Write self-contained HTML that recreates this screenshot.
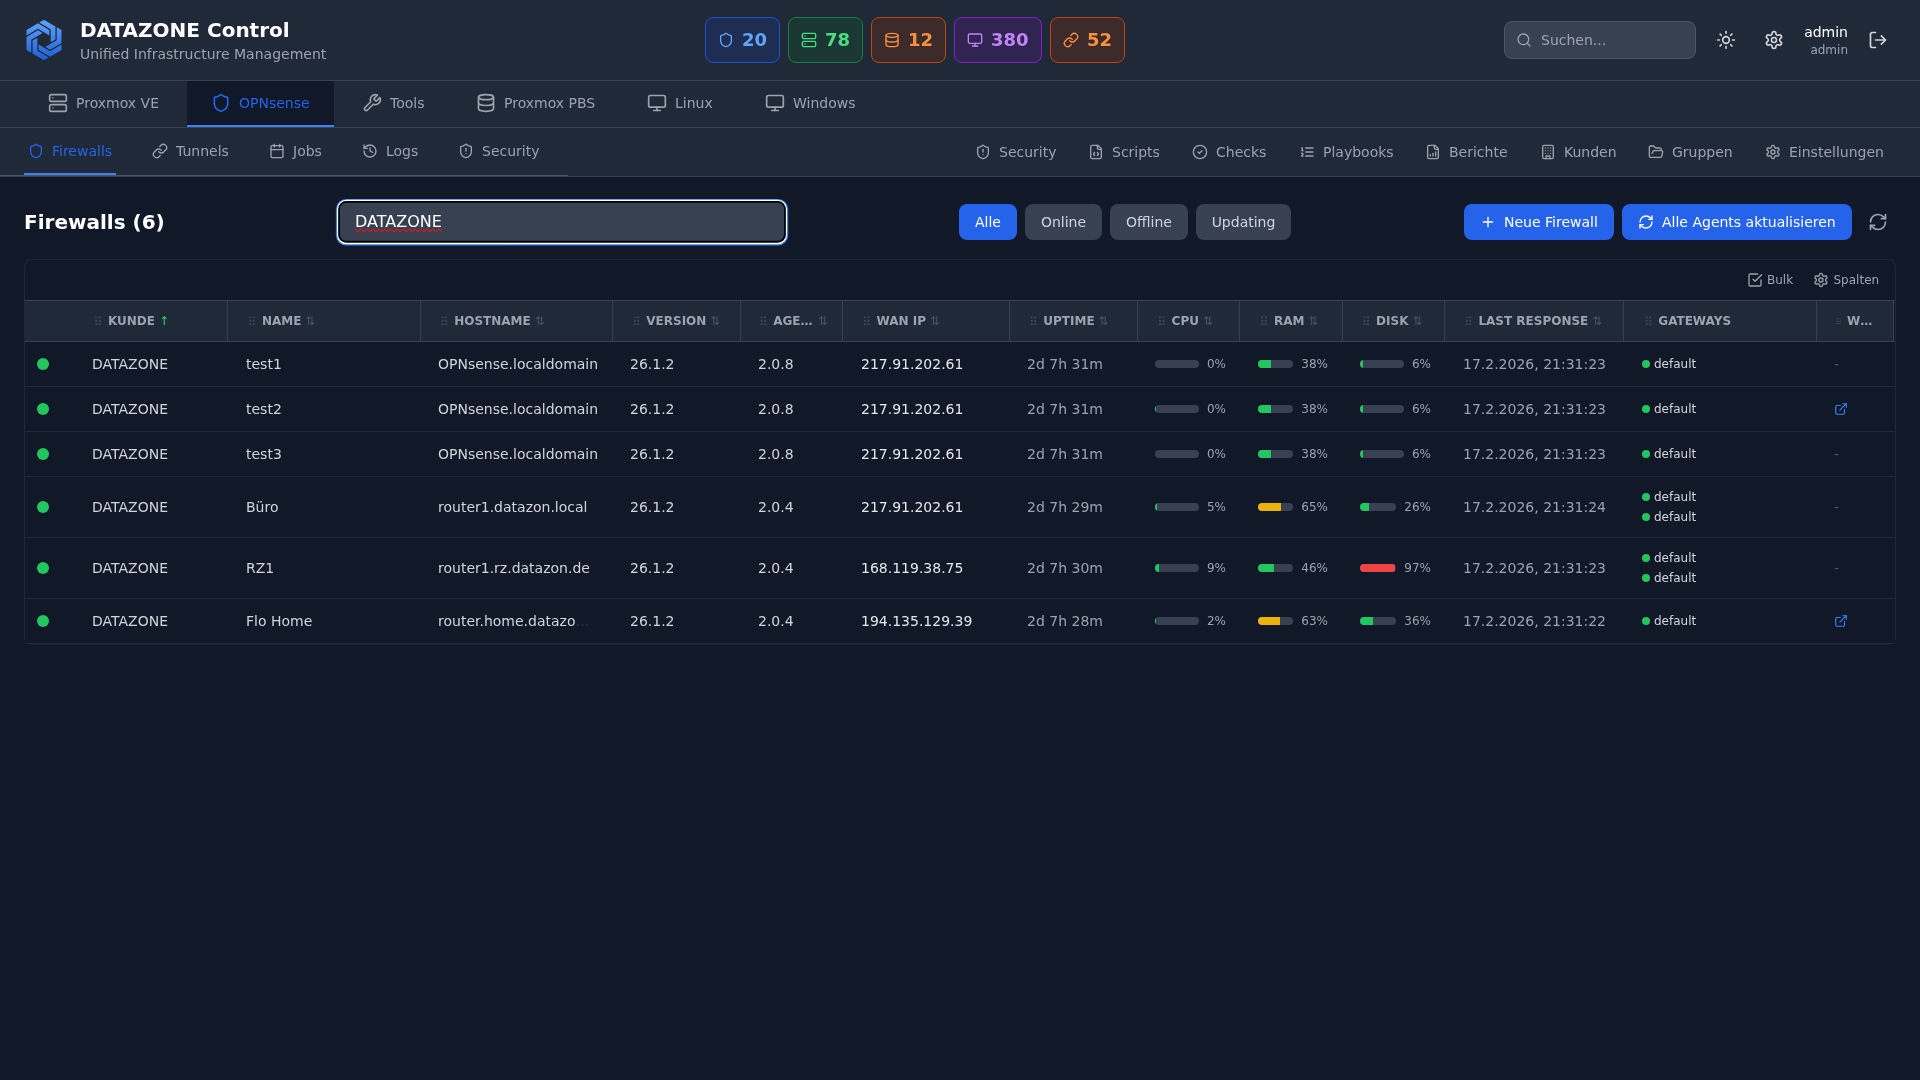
<!DOCTYPE html>
<html lang="de">
<head>
<meta charset="utf-8">
<title>DATAZONE Control</title>
<style>
*{box-sizing:border-box;margin:0;padding:0}
html,body{width:1920px;height:1080px;overflow:hidden}
body{background:#111827;color:#f3f4f6;font-family:"DejaVu Sans","Liberation Sans",sans-serif;font-size:14px;line-height:20px;position:relative}
svg.i{fill:none;stroke:currentColor;stroke-width:2;stroke-linecap:round;stroke-linejoin:round;display:block;flex:none}
.abs{position:absolute}
#root{position:absolute;left:0;top:0;width:1920px;height:1080px;will-change:transform}
/* header */
#hdr{position:absolute;left:0;top:0;width:1920px;height:81px;background:#1f2937;border-bottom:1px solid #374151}
#logo{position:absolute;left:24px;top:20px;width:40px;height:40px}
#title{position:absolute;left:80px;top:16px;font-size:20px;line-height:28px;font-weight:700;color:#fff;white-space:nowrap}
#subtitle{position:absolute;left:80px;top:44px;font-size:14px;line-height:20px;color:#9ca3af;white-space:nowrap}
.stat{position:absolute;top:17px;height:46px;border-radius:8px;border:1px solid;display:flex;align-items:center;padding-left:12px;font-size:18px;font-weight:700;white-space:nowrap}
.stat svg{width:16px;height:16px;margin-right:8px}
#search{position:absolute;left:1504px;top:21px;width:192px;height:38px;background:#374151;border:1px solid #4b5563;border-radius:8px;color:#9ca3af;font-size:14px;line-height:36px;padding-left:36px}
#search svg{position:absolute;left:11px;top:10px;width:16px;height:16px;color:#9ca3af}
.hico{position:absolute;width:20px;height:20px;color:#d1d5db}
#user1{position:absolute;right:72px;top:22px;font-size:14px;line-height:20px;color:#fff;font-weight:500;text-align:right}
#user2{position:absolute;right:72px;top:42px;font-size:12px;line-height:16px;color:#9ca3af;text-align:right}
/* main nav */
#nav1{position:absolute;left:0;top:81px;width:1920px;height:47px;background:#1f2937;border-bottom:1px solid #374151}
.t1{position:absolute;top:0;height:46px;border-bottom:2px solid transparent;display:flex;align-items:center;font-size:14px;color:#9ca3af;white-space:nowrap}
.t1 svg{width:20px;height:20px;margin-right:8px}
.t1.act{background:#111827;color:#2563eb;border-bottom:2px solid #3b82f6}
/* sub nav */
#nav2{position:absolute;left:0;top:128px;width:1920px;height:49px;background:#1f2937;border-bottom:1px solid #374151}
#nav2l{position:absolute;left:0;top:0;width:568px;height:48px;border-bottom:1px solid #4b5563}
.t2{position:absolute;top:0;height:47px;border-bottom:2px solid transparent;display:flex;align-items:center;font-size:14px;color:#9ca3af;white-space:nowrap}
.t2 svg{width:16px;height:16px;margin-right:8px}
.t2.act{color:#2563eb;border-bottom:2px solid #3b82f6}
.t3{position:absolute;top:0;height:48px;display:flex;align-items:center;font-size:14px;color:#9ca3af;white-space:nowrap}
.t3 svg{width:16px;height:16px;margin-right:8px}
/* toolbar */
#h1{position:absolute;left:24px;top:208px;font-size:20px;line-height:28px;font-weight:700;color:#fff;white-space:nowrap}
#filter{position:absolute;left:330px;top:194px;width:464px;height:58px;color:#fff;font-size:16px;line-height:24px}
#filter svg{position:absolute;left:0;top:0}
#filter b{position:absolute;left:25px;top:16px;font-weight:400}
.fb{position:absolute;top:204px;height:36px;border-radius:8px;background:#374151;color:#d1d5db;font-size:14px;line-height:36px;text-align:center;white-space:nowrap}
.fb.act{background:#2563eb;color:#fff}
.pb{position:absolute;top:204px;height:36px;border-radius:8px;background:#2563eb;color:#fff;font-size:14px;display:flex;align-items:center;white-space:nowrap}
.pb svg{width:16px;height:16px;margin-right:8px}
/* table */
#card{position:absolute;left:24px;top:259px;width:1872px;height:381px;border:1px solid #1f2937;border-bottom:0;border-radius:8px 8px 0 0}
#cardb{position:absolute;left:30px;top:644px;width:1860px;height:1px;background:#1f2937;opacity:.8}
#tools{position:absolute;left:0;top:0;width:1870px;height:41px;border-bottom:1px solid #374151}
.tool{position:absolute;top:0;height:40px;display:flex;align-items:center;font-size:12px;color:#9ca3af;white-space:nowrap}
.tool svg{width:16px;height:16px;margin-right:4px}
#thead{position:absolute;left:0;top:41px;width:1870px;height:41px;background:linear-gradient(to right,#1f2937 1869px,transparent 1869px);border-bottom:1px solid #374151}
.th{position:absolute;top:0;height:40px;border-right:1px solid #374151;font-size:12px;line-height:40px;font-weight:700;color:#9ca3af;white-space:nowrap;display:flex;align-items:center;padding-left:18px;overflow:hidden}
.th .g{font-size:12px;color:#3f4957;font-weight:400;margin-right:5.6px;position:relative;top:.8px}
.th .g.sm{font-size:9px;margin-right:5px}
.th .s{font-weight:400;color:#4b5563;font-size:12px;margin-left:4px}
.th .s.up{color:#27d869}
.th .s.r{margin-left:5.5px}
.row{position:absolute;left:0;width:1870px;border-bottom:1px solid #1f2937}
.c{position:absolute;top:0;height:100%;display:flex;align-items:center;font-size:14px;color:#d1d5db;white-space:nowrap}
.c.w{color:#e5e7eb}
.c.m{color:#9ca3af}
.c.d{color:#4b5563}
.el{color:#2d3748}
.dot{position:absolute;left:12px;width:12px;height:12px;border-radius:50%;background:#22c55e;top:50%;margin-top:-6px}
.bar{flex:1;height:8px;border-radius:4px;background:#374151;overflow:hidden;margin-right:8px}
.bar i{display:block;height:8px}
.pct{font-size:12px;color:#9ca3af;flex:none}
.gw{display:flex;align-items:center;font-size:12px;line-height:20px;color:#d1d5db}
.gw:before{content:"";width:8px;height:8px;border-radius:50%;background:#22c55e;margin-right:4px}
.gws{position:absolute;top:0;height:100%;display:flex;flex-direction:column;justify-content:center}
.ext{position:absolute;width:14px;height:14px;color:#3b82f6;top:50%;margin-top:-7px}
</style>
</head>
<body>
<svg width="0" height="0" style="position:absolute">
<defs>
<symbol id="server" viewBox="0 0 24 24"><rect width="20" height="8" x="2" y="2" rx="2" ry="2"/><rect width="20" height="8" x="2" y="14" rx="2" ry="2"/><line x1="6" x2="6.01" y1="6" y2="6"/><line x1="6" x2="6.01" y1="18" y2="18"/></symbol>
<symbol id="shield" viewBox="0 0 24 24"><path d="M20 13c0 5-3.5 7.5-7.66 8.950a1 1 0 0 1-.67-.01C7.5 20.500 4 18 4 13V6a1 1 0 0 1 1-1c2 0 4.500-1.200 6.240-2.720a1.170 1.170 0 0 1 1.520 0C14.510 3.810 17 5 19 5a1 1 0 0 1 1 1z"/></symbol>
<symbol id="shield-alert" viewBox="0 0 24 24"><path d="M20 13c0 5-3.5 7.5-7.66 8.950a1 1 0 0 1-.67-.01C7.5 20.500 4 18 4 13V6a1 1 0 0 1 1-1c2 0 4.500-1.200 6.240-2.720a1.170 1.170 0 0 1 1.520 0C14.510 3.810 17 5 19 5a1 1 0 0 1 1 1z"/><path d="M12 8v4"/><path d="M12 16h.01"/></symbol>
<symbol id="wrench" viewBox="0 0 24 24"><path d="M14.7 6.3a1 1 0 0 0 0 1.4l1.600 1.600a1 1 0 0 0 1.400 0l3.770-3.770a6 6 0 0 1-7.940 7.940l-6.910 6.910a2.120 2.120 0 0 1-3-3l6.910-6.910a6 6 0 0 1 7.940-7.940l-3.760 3.760z"/></symbol>
<symbol id="database" viewBox="0 0 24 24"><ellipse cx="12" cy="5" rx="9" ry="3"/><path d="M3 5V19A9 3 0 0 0 21 19V5"/><path d="M3 12A9 3 0 0 0 21 12"/></symbol>
<symbol id="monitor" viewBox="0 0 24 24"><rect width="20" height="14" x="2" y="3" rx="2"/><line x1="8" x2="16" y1="21" y2="21"/><line x1="12" x2="12" y1="17" y2="21"/></symbol>
<symbol id="link" viewBox="0 0 24 24"><path d="M10 13a5 5 0 0 0 7.540.540l3-3a5 5 0 0 0-7.070-7.070l-1.720 1.710"/><path d="M14 11a5 5 0 0 0-7.540-.540l-3 3a5 5 0 0 0 7.070 7.070l1.710-1.710"/></symbol>
<symbol id="calendar" viewBox="0 0 24 24"><path d="M8 2v4"/><path d="M16 2v4"/><rect width="18" height="18" x="3" y="4" rx="2"/><path d="M3 10h18"/></symbol>
<symbol id="history" viewBox="0 0 24 24"><path d="M3 12a9 9 0 1 0 9-9 9.750 9.750 0 0 0-6.740 2.740L3 8"/><path d="M3 3v5h5"/><path d="M12 7v5l4 2"/></symbol>
<symbol id="file-code" viewBox="0 0 24 24"><path d="M10 12.500 8 15l2 2.500"/><path d="m14 12.500 2 2.500-2 2.500"/><path d="M14 2v4a2 2 0 0 0 2 2h4"/><path d="M15 2H6a2 2 0 0 0-2 2v16a2 2 0 0 0 2 2h12a2 2 0 0 0 2-2V7z"/></symbol>
<symbol id="check-circle" viewBox="0 0 24 24"><circle cx="12" cy="12" r="10"/><path d="m9 12 2 2 4-4"/></symbol>
<symbol id="list-ordered" viewBox="0 0 24 24"><path d="M10 12h11"/><path d="M10 18h11"/><path d="M10 6h11"/><path d="M4 10h2"/><path d="M4 6h1v4"/><path d="M6 18H4c0-1 2-2 2-3s-1-1.500-2-1"/></symbol>
<symbol id="file-chart" viewBox="0 0 24 24"><path d="M15 2H6a2 2 0 0 0-2 2v16a2 2 0 0 0 2 2h12a2 2 0 0 0 2-2V7Z"/><path d="M14 2v4a2 2 0 0 0 2 2h4"/><path d="M8 18v-2"/><path d="M12 18v-4"/><path d="M16 18v-6"/></symbol>
<symbol id="building" viewBox="0 0 24 24"><rect width="16" height="20" x="4" y="2" rx="2" ry="2"/><path d="M9 22v-4h6v4"/><path d="M8 6h.01"/><path d="M16 6h.01"/><path d="M12 6h.01"/><path d="M12 10h.01"/><path d="M12 14h.01"/><path d="M16 10h.01"/><path d="M16 14h.01"/><path d="M8 10h.01"/><path d="M8 14h.01"/></symbol>
<symbol id="folder-open" viewBox="0 0 24 24"><path d="m6 14 1.500-2.900A2 2 0 0 1 9.240 10H20a2 2 0 0 1 1.940 2.500l-1.540 6a2 2 0 0 1-1.950 1.500H4a2 2 0 0 1-2-2V5a2 2 0 0 1 2-2h3.900a2 2 0 0 1 1.690.900l.810 1.200a2 2 0 0 0 1.670.900H18a2 2 0 0 1 2 2v2"/></symbol>
<symbol id="settings" viewBox="0 0 24 24"><path d="M12.22 2h-.44a2 2 0 0 0-2 2v.18a2 2 0 0 1-1 1.730l-.43.25a2 2 0 0 1-2 0l-.15-.08a2 2 0 0 0-2.730.73l-.22.38a2 2 0 0 0 .73 2.730l.15.1a2 2 0 0 1 1 1.720v.51a2 2 0 0 1-1 1.740l-.15.09a2 2 0 0 0-.73 2.730l.22.38a2 2 0 0 0 2.730.73l.15-.08a2 2 0 0 1 2 0l.43.25a2 2 0 0 1 1 1.730V20a2 2 0 0 0 2 2h.44a2 2 0 0 0 2-2v-.18a2 2 0 0 1 1-1.730l.43-.25a2 2 0 0 1 2 0l.15.08a2 2 0 0 0 2.730-.73l.22-.39a2 2 0 0 0-.73-2.730l-.15-.08a2 2 0 0 1-1-1.740v-.5a2 2 0 0 1 1-1.740l.15-.09a2 2 0 0 0 .73-2.730l-.22-.38a2 2 0 0 0-2.730-.73l-.15.08a2 2 0 0 1-2 0l-.43-.25a2 2 0 0 1-1-1.730V4a2 2 0 0 0-2-2z"/><circle cx="12" cy="12" r="3"/></symbol>
<symbol id="sun" viewBox="0 0 24 24"><circle cx="12" cy="12" r="4"/><path d="M12 2v2"/><path d="M12 20v2"/><path d="m4.930 4.930 1.410 1.410"/><path d="m17.660 17.660 1.410 1.410"/><path d="M2 12h2"/><path d="M20 12h2"/><path d="m6.340 17.660-1.410 1.410"/><path d="m19.070 4.930-1.410 1.410"/></symbol>
<symbol id="log-out" viewBox="0 0 24 24"><path d="M9 21H5a2 2 0 0 1-2-2V5a2 2 0 0 1 2-2h4"/><polyline points="16 17 21 12 16 7"/><line x1="21" x2="9" y1="12" y2="12"/></symbol>
<symbol id="search-i" viewBox="0 0 24 24"><circle cx="11" cy="11" r="8"/><path d="m21 21-4.300-4.300"/></symbol>
<symbol id="plus" viewBox="0 0 24 24"><path d="M5 12h14"/><path d="M12 5v14"/></symbol>
<symbol id="refresh" viewBox="0 0 24 24"><path d="M3 12a9 9 0 0 1 9-9 9.750 9.750 0 0 1 6.740 2.740L21 8"/><path d="M21 3v5h-5"/><path d="M21 12a9 9 0 0 1-9 9 9.750 9.750 0 0 1-6.740-2.740L3 16"/><path d="M8 16H3v5"/></symbol>
<symbol id="check-square" viewBox="0 0 24 24"><path d="m9 11 3 3L22 4"/><path d="M21 12v7a2 2 0 0 1-2 2H5a2 2 0 0 1-2-2V5a2 2 0 0 1 2-2h11"/></symbol>
<symbol id="external" viewBox="0 0 24 24"><path d="M15 3h6v6"/><path d="M10 14 21 3"/><path d="M18 13v6a2 2 0 0 1-2 2H5a2 2 0 0 1-2-2V8a2 2 0 0 1 2-2h6"/></symbol>
</defs>
</svg>

<div id="root">
<!-- HEADER -->
<div id="hdr">
  <svg id="logo" viewBox="0 0 40 40"><defs><linearGradient id="lg" x1="0" y1="0" x2="0" y2="1"><stop offset="0" stop-color="#5fa3fa"/><stop offset="1" stop-color="#1d5fd6"/></linearGradient></defs><path fill="url(#lg)" d="M20.00 -0.20 31.43 6.40 31.43 19.60 26.69 22.34 26.69 9.14 15.25 2.54ZM37.49 9.90 37.49 23.10 26.06 29.70 21.31 26.96 32.75 20.36 32.75 7.16ZM37.49 30.10 26.06 36.70 14.63 30.10 14.63 24.62 26.06 31.22 37.49 24.62ZM20.00 40.20 8.57 33.60 8.57 20.40 13.31 17.66 13.31 30.86 24.75 37.46ZM2.51 30.10 2.51 16.90 13.94 10.30 18.69 13.04 7.25 19.64 7.25 32.84ZM2.51 9.90 13.94 3.30 25.37 9.90 25.37 15.38 13.94 8.78 2.51 15.38Z"/></svg>
  <div id="title">DATAZONE Control</div>
  <div id="subtitle">Unified Infrastructure Management</div>

  <div class="stat" style="left:705px;width:75px;background:#1e3a8a55;border-color:#1d4ed8;color:#60a5fa"><svg class="i"><use href="#shield"/></svg>20</div>
  <div class="stat" style="left:788px;width:75px;background:#14532d55;border-color:#15803d;color:#4ade80"><svg class="i"><use href="#server"/></svg>78</div>
  <div class="stat" style="left:871px;width:75px;background:#7c2d1255;border-color:#c2410c;color:#fb923c"><svg class="i"><use href="#database"/></svg>12</div>
  <div class="stat" style="left:954px;width:88px;background:#581c8755;border-color:#7e22ce;color:#c084fc"><svg class="i"><use href="#monitor"/></svg>380</div>
  <div class="stat" style="left:1050px;width:75px;background:#7c2d1255;border-color:#c2410c;color:#fb923c"><svg class="i"><use href="#link"/></svg>52</div>

  <div id="search"><svg class="i"><use href="#search-i"/></svg>Suchen...</div>
  <svg class="i hico" style="left:1716px;top:30px"><use href="#sun"/></svg>
  <svg class="i hico" style="left:1764px;top:30px"><use href="#settings"/></svg>
  <div id="user1">admin</div>
  <div id="user2">admin</div>
  <svg class="i hico" style="left:1868px;top:30px"><use href="#log-out"/></svg>
</div>

<!-- MAIN NAV -->
<div id="nav1">
  <div class="t1" style="left:24px;padding:0 24px"><svg class="i"><use href="#server"/></svg>Proxmox VE</div>
  <div class="t1 act" style="left:187px;width:147px;padding:0 24px"><svg class="i"><use href="#shield"/></svg>OPNsense</div>
  <div class="t1" style="left:338px;padding:0 24px"><svg class="i"><use href="#wrench"/></svg>Tools</div>
  <div class="t1" style="left:452px;padding:0 24px"><svg class="i"><use href="#database"/></svg>Proxmox PBS</div>
  <div class="t1" style="left:623px;padding:0 24px"><svg class="i"><use href="#monitor"/></svg>Linux</div>
  <div class="t1" style="left:741px;padding:0 24px"><svg class="i"><use href="#monitor"/></svg>Windows</div>
</div>

<!-- SUB NAV -->
<div id="nav2">
  <div id="nav2l"></div>
  <div class="t2 act" style="left:24px;width:92px;padding-left:4px"><svg class="i"><use href="#shield"/></svg>Firewalls</div>
  <div class="t2" style="left:152px"><svg class="i"><use href="#link"/></svg>Tunnels</div>
  <div class="t2" style="left:269px"><svg class="i"><use href="#calendar"/></svg>Jobs</div>
  <div class="t2" style="left:362px"><svg class="i"><use href="#history"/></svg>Logs</div>
  <div class="t2" style="left:458px"><svg class="i"><use href="#shield-alert"/></svg>Security</div>

  <div class="t3" style="left:975px"><svg class="i"><use href="#shield-alert"/></svg>Security</div>
  <div class="t3" style="left:1088px"><svg class="i"><use href="#file-code"/></svg>Scripts</div>
  <div class="t3" style="left:1192px"><svg class="i"><use href="#check-circle"/></svg>Checks</div>
  <div class="t3" style="left:1299px"><svg class="i"><use href="#list-ordered"/></svg>Playbooks</div>
  <div class="t3" style="left:1425px"><svg class="i"><use href="#file-chart"/></svg>Berichte</div>
  <div class="t3" style="left:1540px"><svg class="i"><use href="#building"/></svg>Kunden</div>
  <div class="t3" style="left:1648px"><svg class="i"><use href="#folder-open"/></svg>Gruppen</div>
  <div class="t3" style="left:1765px"><svg class="i"><use href="#settings"/></svg>Einstellungen</div>
</div>

<!-- TOOLBAR -->
<div id="h1">Firewalls (6)</div>
<div id="filter"><svg width="464" height="58" viewBox="0 0 464 58"><rect x="5.9" y="4.9" width="452.3" height="46.5" rx="10.2" fill="#3b82f6"/><rect x="7" y="5.85" width="450" height="44.4" rx="9.2" fill="#fff"/><rect x="8.15" y="7.05" width="447.7" height="41.6" rx="8" fill="#000"/><rect x="9.9" y="8.7" width="444.1" height="38.1" rx="6.3" fill="#374151"/><path d="M25,35.2 L28,37.7 L31,35.2 L34,37.7 L37,35.2 L40,37.7 L43,35.2 L46,37.7 L49,35.2 L52,37.7 L55,35.2 L58,37.7 L61,35.2 L64,37.7 L67,35.2 L70,37.7 L73,35.2 L76,37.7 L79,35.2 L82,37.7 L85,35.2 L88,37.7 L91,35.2 L94,37.7 L97,35.2 L100,37.7 L103,35.2 L106,37.7 L109,35.2 L112,37.7" fill="none" stroke="#e51515" stroke-width="1.1"/></svg><b>DATAZONE</b></div>
<div class="fb act" style="left:959px;width:58px">Alle</div>
<div class="fb" style="left:1025px;width:77px">Online</div>
<div class="fb" style="left:1110px;width:78px">Offline</div>
<div class="fb" style="left:1196px;width:95px">Updating</div>
<div class="pb" style="left:1464px;width:150px;padding-left:16px"><svg class="i"><use href="#plus"/></svg>Neue Firewall</div>
<div class="pb" style="left:1622px;width:230px;padding-left:16px"><svg class="i"><use href="#refresh"/></svg>Alle Agents aktualisieren</div>
<svg class="i abs" style="left:1868px;top:212px;width:20px;height:20px;color:#9ca3af"><use href="#refresh"/></svg>

<!-- TABLE -->
<div id="cardb"></div>
<div id="card">
  <div id="tools">
    <div class="tool" style="left:1722px"><svg class="i"><use href="#check-square"/></svg>Bulk</div>
    <div class="tool" style="left:1787.5px"><svg class="i" style="margin-right:5px"><use href="#settings"/></svg>Spalten</div>
  </div>
  <div id="thead">
    <div class="th" style="left:51px;width:152px;padding-left:17.5px"><span class="g">⠿</span><span class="l">KUNDE</span><span class="s up">↑</span></div>
    <div class="th" style="left:203px;width:193px;padding-left:19.5px"><span class="g">⠿</span><span class="l">NAME</span><span class="s">⇅</span></div>
    <div class="th" style="left:396px;width:192px;padding-left:18.8px"><span class="g">⠿</span><span class="l">HOSTNAME</span><span class="s">⇅</span></div>
    <div class="th" style="left:588px;width:128px;padding-left:18.9px"><span class="g">⠿</span><span class="l">VERSION</span><span class="s">⇅</span></div>
    <div class="th" style="left:716px;width:102px;padding-left:17.8px"><span class="g">⠿</span><span class="l">AGE…</span><span class="s r">⇅</span></div>
    <div class="th" style="left:818px;width:167px;padding-left:19.2px"><span class="g">⠿</span><span class="l">WAN IP</span><span class="s">⇅</span></div>
    <div class="th" style="left:985px;width:128px;padding-left:18.9px"><span class="g">⠿</span><span class="l">UPTIME</span><span class="s">⇅</span></div>
    <div class="th" style="left:1113px;width:102px;padding-left:19.2px"><span class="g">⠿</span><span class="l">CPU</span><span class="s">⇅</span></div>
    <div class="th" style="left:1215px;width:103px;padding-left:19.5px"><span class="g">⠿</span><span class="l">RAM</span><span class="s">⇅</span></div>
    <div class="th" style="left:1318px;width:102px;padding-left:18.7px"><span class="g">⠿</span><span class="l">DISK</span><span class="s">⇅</span></div>
    <div class="th" style="left:1420px;width:179px;padding-left:19.0px"><span class="g">⠿</span><span class="l">LAST RESPONSE</span><span class="s">⇅</span></div>
    <div class="th" style="left:1599px;width:193px;padding-left:19.9px"><span class="g">⠿</span><span class="l">GATEWAYS</span></div>
    <div class="th" style="left:1792px;width:77px;padding-left:18.4px"><span class="g sm">⠿</span><span class="l">W…</span></div>
  </div>
  <div id="tbody">
    <div class="row" style="top:82px;height:45px">
      <span class="dot"></span>
      <div class="c" style="left:67px">DATAZONE</div>
      <div class="c" style="left:221px">test1</div>
      <div class="c" style="left:413px">OPNsense.localdomain</div>
      <div class="c" style="left:605px">26.1.2</div>
      <div class="c" style="left:733px">2.0.8</div>
      <div class="c w" style="left:836px">217.91.202.61</div>
      <div class="c m" style="left:1002px">2d 7h 31m</div>
      <div class="c" style="left:1130px;width:71px"><span class="bar"><i style="width:0%;background:#22c55e"></i></span><span class="pct">0%</span></div>
      <div class="c" style="left:1233px;width:70px"><span class="bar"><i style="width:38%;background:#22c55e"></i></span><span class="pct">38%</span></div>
      <div class="c" style="left:1335px;width:71px"><span class="bar"><i style="width:6%;background:#22c55e"></i></span><span class="pct">6%</span></div>
      <div class="c m" style="left:1438px">17.2.2026, 21:31:23</div>
      <div class="gws" style="left:1617px"><span class="gw">default</span></div>
      <div class="c d" style="left:1809px">-</div>
    </div>
    <div class="row" style="top:127px;height:45px">
      <span class="dot"></span>
      <div class="c" style="left:67px">DATAZONE</div>
      <div class="c" style="left:221px">test2</div>
      <div class="c" style="left:413px">OPNsense.localdomain</div>
      <div class="c" style="left:605px">26.1.2</div>
      <div class="c" style="left:733px">2.0.8</div>
      <div class="c w" style="left:836px">217.91.202.61</div>
      <div class="c m" style="left:1002px">2d 7h 31m</div>
      <div class="c" style="left:1130px;width:71px"><span class="bar"><i style="width:0.5%;background:#22c55e"></i></span><span class="pct">0%</span></div>
      <div class="c" style="left:1233px;width:70px"><span class="bar"><i style="width:38%;background:#22c55e"></i></span><span class="pct">38%</span></div>
      <div class="c" style="left:1335px;width:71px"><span class="bar"><i style="width:6%;background:#22c55e"></i></span><span class="pct">6%</span></div>
      <div class="c m" style="left:1438px">17.2.2026, 21:31:23</div>
      <div class="gws" style="left:1617px"><span class="gw">default</span></div>
      <svg class="i ext" style="left:1809px"><use href="#external"/></svg>
    </div>
    <div class="row" style="top:172px;height:45px">
      <span class="dot"></span>
      <div class="c" style="left:67px">DATAZONE</div>
      <div class="c" style="left:221px">test3</div>
      <div class="c" style="left:413px">OPNsense.localdomain</div>
      <div class="c" style="left:605px">26.1.2</div>
      <div class="c" style="left:733px">2.0.8</div>
      <div class="c w" style="left:836px">217.91.202.61</div>
      <div class="c m" style="left:1002px">2d 7h 31m</div>
      <div class="c" style="left:1130px;width:71px"><span class="bar"><i style="width:0%;background:#22c55e"></i></span><span class="pct">0%</span></div>
      <div class="c" style="left:1233px;width:70px"><span class="bar"><i style="width:38%;background:#22c55e"></i></span><span class="pct">38%</span></div>
      <div class="c" style="left:1335px;width:71px"><span class="bar"><i style="width:6%;background:#22c55e"></i></span><span class="pct">6%</span></div>
      <div class="c m" style="left:1438px">17.2.2026, 21:31:23</div>
      <div class="gws" style="left:1617px"><span class="gw">default</span></div>
      <div class="c d" style="left:1809px">-</div>
    </div>
    <div class="row" style="top:217px;height:61px">
      <span class="dot"></span>
      <div class="c" style="left:67px">DATAZONE</div>
      <div class="c" style="left:221px">Büro</div>
      <div class="c" style="left:413px">router1.datazon.local</div>
      <div class="c" style="left:605px">26.1.2</div>
      <div class="c" style="left:733px">2.0.4</div>
      <div class="c w" style="left:836px">217.91.202.61</div>
      <div class="c m" style="left:1002px">2d 7h 29m</div>
      <div class="c" style="left:1130px;width:71px"><span class="bar"><i style="width:5%;background:#22c55e"></i></span><span class="pct">5%</span></div>
      <div class="c" style="left:1233px;width:70px"><span class="bar"><i style="width:65%;background:#eab308"></i></span><span class="pct">65%</span></div>
      <div class="c" style="left:1335px;width:71px"><span class="bar"><i style="width:26%;background:#22c55e"></i></span><span class="pct">26%</span></div>
      <div class="c m" style="left:1438px">17.2.2026, 21:31:24</div>
      <div class="gws" style="left:1617px"><span class="gw">default</span><span class="gw">default</span></div>
      <div class="c d" style="left:1809px">-</div>
    </div>
    <div class="row" style="top:278px;height:61px">
      <span class="dot"></span>
      <div class="c" style="left:67px">DATAZONE</div>
      <div class="c" style="left:221px">RZ1</div>
      <div class="c" style="left:413px">router1.rz.datazon.de</div>
      <div class="c" style="left:605px">26.1.2</div>
      <div class="c" style="left:733px">2.0.4</div>
      <div class="c w" style="left:836px">168.119.38.75</div>
      <div class="c m" style="left:1002px">2d 7h 30m</div>
      <div class="c" style="left:1130px;width:71px"><span class="bar"><i style="width:9%;background:#22c55e"></i></span><span class="pct">9%</span></div>
      <div class="c" style="left:1233px;width:70px"><span class="bar"><i style="width:46%;background:#22c55e"></i></span><span class="pct">46%</span></div>
      <div class="c" style="left:1335px;width:71px"><span class="bar"><i style="width:97%;background:#ef4444"></i></span><span class="pct">97%</span></div>
      <div class="c m" style="left:1438px">17.2.2026, 21:31:23</div>
      <div class="gws" style="left:1617px"><span class="gw">default</span><span class="gw">default</span></div>
      <div class="c d" style="left:1809px">-</div>
    </div>
    <div class="row" style="top:339px;height:45px">
      <span class="dot"></span>
      <div class="c" style="left:67px">DATAZONE</div>
      <div class="c" style="left:221px">Flo Home</div>
      <div class="c" style="left:413px">router.home.datazo<span class="el">…</span></div>
      <div class="c" style="left:605px">26.1.2</div>
      <div class="c" style="left:733px">2.0.4</div>
      <div class="c w" style="left:836px">194.135.129.39</div>
      <div class="c m" style="left:1002px">2d 7h 28m</div>
      <div class="c" style="left:1130px;width:71px"><span class="bar"><i style="width:2%;background:#22c55e"></i></span><span class="pct">2%</span></div>
      <div class="c" style="left:1233px;width:70px"><span class="bar"><i style="width:63%;background:#eab308"></i></span><span class="pct">63%</span></div>
      <div class="c" style="left:1335px;width:71px"><span class="bar"><i style="width:36%;background:#22c55e"></i></span><span class="pct">36%</span></div>
      <div class="c m" style="left:1438px">17.2.2026, 21:31:22</div>
      <div class="gws" style="left:1617px"><span class="gw">default</span></div>
      <svg class="i ext" style="left:1809px"><use href="#external"/></svg>
    </div>
  </div>
</div>
</div>
</body>
</html>
